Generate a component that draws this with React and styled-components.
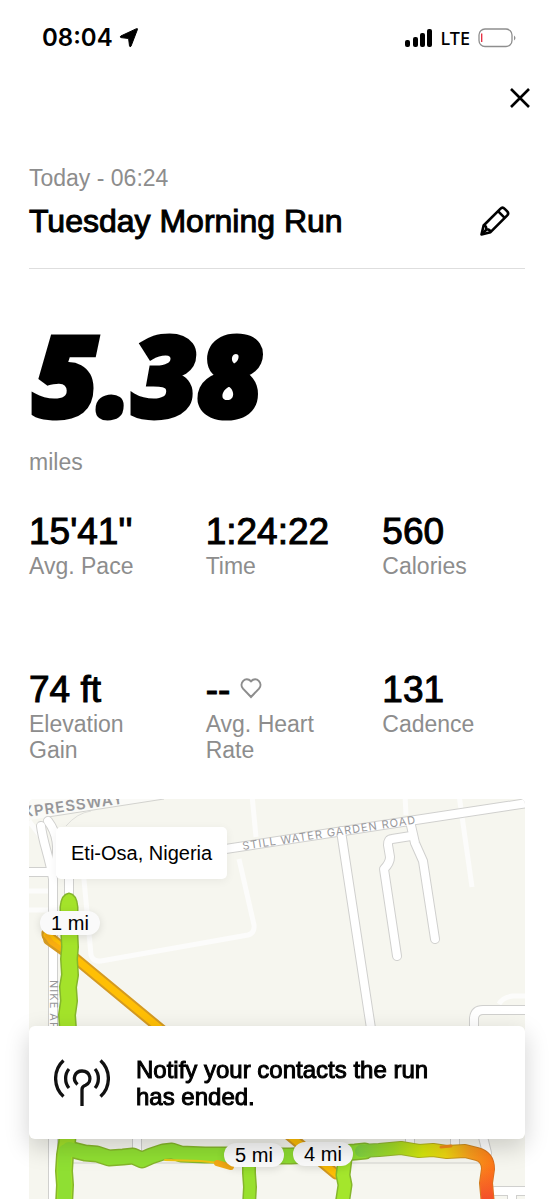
import React from 'react';
import styled, { createGlobalStyle } from 'styled-components';

const stats = [
  { value: "15'41''", label: 'Avg. Pace' },
  { value: '1:24:22', label: 'Time' },
  { value: '560', label: 'Calories' },
  { value: '74 ft', label: 'Elevation Gain' },
  { value: '--', label: 'Avg. Heart Rate', heart: true },
  { value: '131', label: 'Cadence' },
];

const markers = [
  { label: '1 mi', x: 11, y: 112 },
  { label: '5 mi', x: 195, y: 344 },
  { label: '4 mi', x: 264, y: 343 },
];

// cased roads get a thin grey edge, faint ones are plain white
const roads = [
  'M-4 73H26',
  'M12 27C14 44 20 56 24 80V410',
  'M19 22C28 34 30 50 26 66',
  'M40 60V100',
  'M190 51L505 3',
  'M312 32L343 236',
  'M381 22L386 44L394 62L406 140',
  'M382 37L363 40Q359 40 359 46L361 58Q361 64 355 70L368 157',
  'M445 240V219Q446 211 454 211H505',
  'M108 330V352',
  'M381 330V352',
  'M426 330V352',
  'M452 330L458 354',
  'M466 392H505',
  'M483 392V410',
];

const faintRoads = [
  'M-4 92H22',
  'M-4 111H22',
  'M0 22L12 38',
  'M54 70L62 156Q64 163 72 162L219 136Q226 134 225 126L210 60',
  'M223 -4L227 38',
  'M376 -4L377 16',
  'M430 -4L443 88',
  'M470 205Q474 198 484 197H505',
];

const routeTip = 'M40 95Q47 96 48 108V126H32V108Q33 96 40 95Z';
const routeDown = 'M40 108V128L41 148L40 160L41 176L39 188L40 202L38 216L39 230V330L38 344L36 356L35 372L36 386L35 406';
const routeAcross = 'M40 350L56 354L68 355L80 359L94 358L104 357L113 361L122 357L134 353L143 352L152 355L176 356L200 356L218 357H262L300 355L326 353L336 352';
const routeFourth = 'M316 360L314 376L316 386L313 406';
const routeFifth = 'M220 360V374L221 388L220 406';
const routeEast = 'M332 352L350 351L372 349L390 352L404 351L418 353L436 352L448 355Q459 358 459 370L457 384L459 406';

function StatusBar() {
  return (
    <StatusRow>
      <Clock>
        08:04
        <svg width="20" height="20" viewBox="0 0 20 20" aria-hidden="true">
          <path d="M18.5 1.3 12 18.2Q11 19.6 10.5 17.8L9.6 10.5 2 9.6Q.4 9 1.8 8L17 .9Q19 .2 18.5 1.3Z" stroke="#000" />
        </svg>
      </Clock>
      <Signal>
        <svg width="28" height="20" viewBox="0 0 28 20" aria-hidden="true">
          <rect x="0" y="12" width="5" height="7" rx="2" />
          <rect x="8" y="9" width="5" height="10" rx="2" />
          <rect x="15" y="5" width="5" height="14" rx="2" />
          <rect x="22" y="1" width="5" height="18" rx="2" />
        </svg>
        LTE
        <svg width="38" height="20" viewBox="0 0 38 20" fill="none" aria-hidden="true">
          <rect x="1" y="1" width="33" height="17.500" rx="6" stroke="#8e8e8e" strokeWidth="1.300" />
          <path d="M3.700 5.500V14" stroke="#e5263a" strokeWidth="1.300" />
          <path d="M36 7.500Q39 10 36 12.500Z" fill="#8e8e8e" />
        </svg>
      </Signal>
    </StatusRow>
  );
}

function RouteMap() {
  return (
    <MapArt viewBox="0 0 497 400" preserveAspectRatio="xMinYMin slice" aria-hidden="true">
      <defs>
        <linearGradient id="pace" gradientUnits="userSpaceOnUse" x1="320" y1="0" x2="468" y2="0">
          <stop offset="0" stopColor="#76cc48" />
          <stop offset=".3" stopColor="#a2db25" />
          <stop offset=".5" stopColor="#d6e60c" />
          <stop offset=".65" stopColor="#ecd510" />
          <stop offset=".82" stopColor="#f79c1c" />
          <stop offset="1" stopColor="#ff7417" />
        </linearGradient>
        <linearGradient id="edge" gradientUnits="userSpaceOnUse" x1="320" y1="0" x2="468" y2="0">
          <stop offset="0" stopColor="#6fae45" />
          <stop offset=".5" stopColor="#b3b81c" />
          <stop offset="1" stopColor="#dc6a1e" />
        </linearGradient>
        <linearGradient id="slow" gradientUnits="userSpaceOnUse" x1="0" y1="364" x2="0" y2="400">
          <stop offset="0" stopColor="#f4502a" stopOpacity="0" />
          <stop offset="1" stopColor="#f4502a" />
        </linearGradient>
      </defs>
      <path d="M0 0H135L19 18L0 21Z" fill="#fafaf7" />
      <path d="M135 0L19 18" stroke="#d2d2ce" />
      <g fill="none" stroke="#fcfcfb" strokeWidth="5">
        {faintRoads.map((d) => <path key={d} d={d} />)}
      </g>
      <path d="M37 27Q48 14 62 12" fill="none" stroke="#dededa" />
      <g fill="none" strokeLinecap="round" strokeLinejoin="round">
        <g stroke="#d0d0ce" strokeWidth="10">
          {roads.map((d) => <path key={d} d={d} />)}
        </g>
        <g stroke="#fff" strokeWidth="8">
          {roads.map((d) => <path key={d} d={d} />)}
        </g>
        <path d="M42 364H452" stroke="#d2d2ce" />
      </g>
      <MapLabel transform="translate(-16 20) rotate(-8)" $size={15} $heavy>EXPRESSWAY</MapLabel>
      <MapLabel transform="translate(214 51) rotate(-8.700)" $size={11}>STILL WATER GARDEN ROAD</MapLabel>
      <MapLabel transform="translate(21 181) rotate(90)" $size={11}>NIKE ART GALLERY</MapLabel>
      <g fill="none" strokeLinecap="round" strokeLinejoin="round">
        <path d="M18 136L307 375" stroke="#d49a22" strokeWidth="11" />
        <path d="M16 134L18 142L36 155" stroke="#d49a22" strokeWidth="7" />
        <path d="M18 136L307 375" stroke="#ffbf05" strokeWidth="7" />
        <path d="M18 137L22 143L36 153" stroke="#f9ae10" strokeWidth="5" />

        <g stroke="#85b62b">
          <path d={routeTip} strokeWidth="3" />
          <path d={routeDown} strokeWidth="18" />
          <path d={routeAcross} strokeWidth="17" />
          <path d={routeFifth} strokeWidth="14" />
          <path d={routeFourth} strokeWidth="15" />
        </g>
        <path d={routeEast} stroke="url(#edge)" strokeWidth="14" />
        <path d={routeTip} fill="#a4e32a" />
        <path d={routeDown} stroke="#a4e32a" strokeWidth="15" />
        <path d="M36 352L35 372L36 386L35 406" stroke="#8fdf33" strokeWidth="13" />
        <path d={routeAcross} stroke="#90df32" strokeWidth="14" />
        <path d={routeFifth} stroke="#98e02d" strokeWidth="11" />
        <path d={routeFourth} stroke="#a4e62c" strokeWidth="12" />
        <path d="M136 361L172 362L190 364L204 367" stroke="#eec512" strokeWidth="2" />
        <path d="M188 364L202 368" stroke="#f2a915" strokeWidth="6" />
        <path d={routeEast} stroke="url(#pace)" strokeWidth="12" />
        <path d="M459 368L457 384L459 406" stroke="url(#slow)" strokeWidth="12" />
        <path d="M412 348L422 347" stroke="#f28b19" strokeWidth="3" />
      </g>
    </MapArt>
  );
}

function App() {
  return (
    <Page>
      <GlobalStyle />
      <StatusBar />
      <TopBar>
        <IconButton type="button" aria-label="Close">
          <svg width="22" height="22" viewBox="0 0 22 22" fill="none" stroke="#000" strokeWidth="2.600">
            <path d="M2 2 20 20M20 2 2 20" />
          </svg>
        </IconButton>
      </TopBar>
      <Content>
        <Muted>Today - 06:24</Muted>
        <TitleRow>
          <Title>Tuesday Morning Run</Title>
          <IconButton type="button" aria-label="Edit name">
            <svg width="32" height="32" viewBox="0 0 32 32" fill="none" stroke="#000" strokeWidth="2.600" strokeLinejoin="round">
              <path d="M2.500 29.500 4.600 20.500 21.300 3.800Q23.500 1.600 25.700 3.800L28 6.100Q30.300 8.400 28 10.700L11.500 27.200Z" />
              <path d="M19 6.200 25.700 12.900M4.800 20.500Q7.500 20.500 7.200 24.200Q11 24 11.500 27.200M3 29 7.500 24.500" />
            </svg>
          </IconButton>
        </TitleRow>
        <Distance>5.38</Distance>
        <Muted>miles</Muted>
        <Stats>
          {stats.map(({ value, label, heart }) => (
            <Stat key={label}>
              <StatValue>
                {value}
                {heart && (
                  <svg width="22" height="26" viewBox="0 0 22 26" fill="none" stroke="#8d8d8d" strokeWidth="2" aria-hidden="true">
                    <path d="M11 20 3 11.700C-1.500 6.500 5.500-1.500 11 4.300C16.500-1.500 23.500 6.500 19 11.700Z" />
                  </svg>
                )}
              </StatValue>
              <StatLabel>{label}</StatLabel>
            </Stat>
          ))}
        </Stats>
        <MapPanel>
          <RouteMap />
          <Place>Eti-Osa, Nigeria</Place>
          {markers.map(({ label, x, y }) => (
            <Marker key={label} $x={x} $y={y}>{label}</Marker>
          ))}
        </MapPanel>
      </Content>
      <Notice role="status">
        <svg width="56" height="50" viewBox="0 0 56 50" fill="none" stroke="#111" strokeWidth="3.300" aria-hidden="true">
          <path d="M9.500 2.500C-1 12-1 29 9.500 38.500M46.500 2.500C57 12 57 29 46.500 38.500M15 11C10.500 16 10.500 25 15 30M41 11C45.500 16 45.500 25 41 30" />
          <path d="M23.500 26.500C17.500 21 21 13 28 13C36.500 13 39 24 31.500 27.300Q28 28.500 28 31.500V48" />
        </svg>
        <NoticeText>Notify your contacts the run has ended.</NoticeText>
      </Notice>
    </Page>
  );
}

const GlobalStyle = createGlobalStyle`
  * {
    box-sizing: border-box;
  }

  body {
    margin: 0;
    background: #fff;
    color: #000;
    font-family: 'Liberation Sans', Arial, sans-serif;
  }

  svg {
    display: block;
    flex-shrink: 0;
  }
`;

const Page = styled.div`
  min-height: 100vh;
`;

const StatusRow = styled.div`
  display: flex;
  justify-content: space-between;
  align-items: center;
  height: 75px;
  padding: 0 38px 0 42px;
`;

const Clock = styled.div`
  display: flex;
  align-items: center;
  gap: 6px;
  font: 600 24px/30px Inter, sans-serif;
`;

const Signal = styled.div`
  display: flex;
  align-items: center;
  gap: 8px;
  font: 500 18px/24px 'Noto Sans', sans-serif;
`;

const TopBar = styled.div`
  display: flex;
  justify-content: flex-end;
  padding: 12px 23px 56px;
`;

const IconButton = styled.button`
  padding: 0;
  border: 0;
  background: none;
  cursor: pointer;
`;

const Content = styled.main`
  padding: 0 29px;
`;

const Muted = styled.div`
  color: #8d8d8d;
  font-size: 23px;
  line-height: 26px;
`;

const TitleRow = styled.div`
  display: flex;
  justify-content: space-between;
  align-items: center;
  padding: 12px 14px 29px 0;
  border-bottom: 1px solid #dedede;
`;

const Title = styled.h1`
  margin: 0;
  font-size: 32px;
  font-weight: 400;
  line-height: 36px;
  -webkit-text-stroke: 1px #000;
`;

const Distance = styled.div`
  margin: 60px 0 30px;
  padding-left: 4px;
  font: italic 800 112px/90px 'Open Sans', sans-serif;
  -webkit-text-stroke: 5px #000;
`;

const Stats = styled.div`
  display: grid;
  grid-template-columns: repeat(3, 1fr);
  gap: 64px 34px;
  margin: 36px 0 36px;
`;

const Stat = styled.div`
  display: flex;
  flex-direction: column;
`;

const StatValue = styled.div`
  display: flex;
  align-items: center;
  gap: 10px;
  font-size: 37px;
  line-height: 42px;
  white-space: nowrap;
  -webkit-text-stroke: 1px #000;
`;

const StatLabel = styled(Muted)`
  min-height: 52px;
`;

const MapPanel = styled.section`
  position: relative;
  height: 400px;
  overflow: hidden;
  border-radius: 5px 5px 0 0;
  background: #f6f6ef;
`;

const MapArt = styled.svg`
  width: 100%;
  height: 100%;
`;

const MapLabel = styled.text`
  fill: #97979a;
  font-family: Inter, sans-serif;
  font-size: ${({ $size }) => $size}px;
  font-weight: ${({ $heavy }) => ($heavy ? 600 : 400)};
  letter-spacing: 1px;
`;

const Place = styled.div`
  position: absolute;
  top: 28px;
  left: 27px;
  padding: 14px 15px;
  border-radius: 5px;
  background: #fff;
  box-shadow: 0 2px 10px rgba(0, 0, 0, 0.06);
  font-size: 20px;
  line-height: 24px;
`;

const Marker = styled.div`
  position: absolute;
  top: ${({ $y }) => $y}px;
  left: ${({ $x }) => $x}px;
  width: 60px;
  border-radius: 12px;
  background: #fafafa;
  box-shadow: 0 2px 8px rgba(0, 0, 0, 0.12);
  font-size: 20px;
  line-height: 24px;
  text-align: center;
`;

const Notice = styled.aside`
  position: fixed;
  right: 29px;
  bottom: 60px;
  left: 29px;
  display: flex;
  align-items: center;
  gap: 26px;
  padding: 30px 25px 29px;
  border-radius: 6px;
  background: #fff;
  box-shadow: 0 8px 24px rgba(0, 0, 0, 0.18);
`;

const NoticeText = styled.p`
  max-width: 310px;
  margin: 0;
  font-size: 24px;
  line-height: 27px;
  -webkit-text-stroke: 1px #000;
`;

export default App;
